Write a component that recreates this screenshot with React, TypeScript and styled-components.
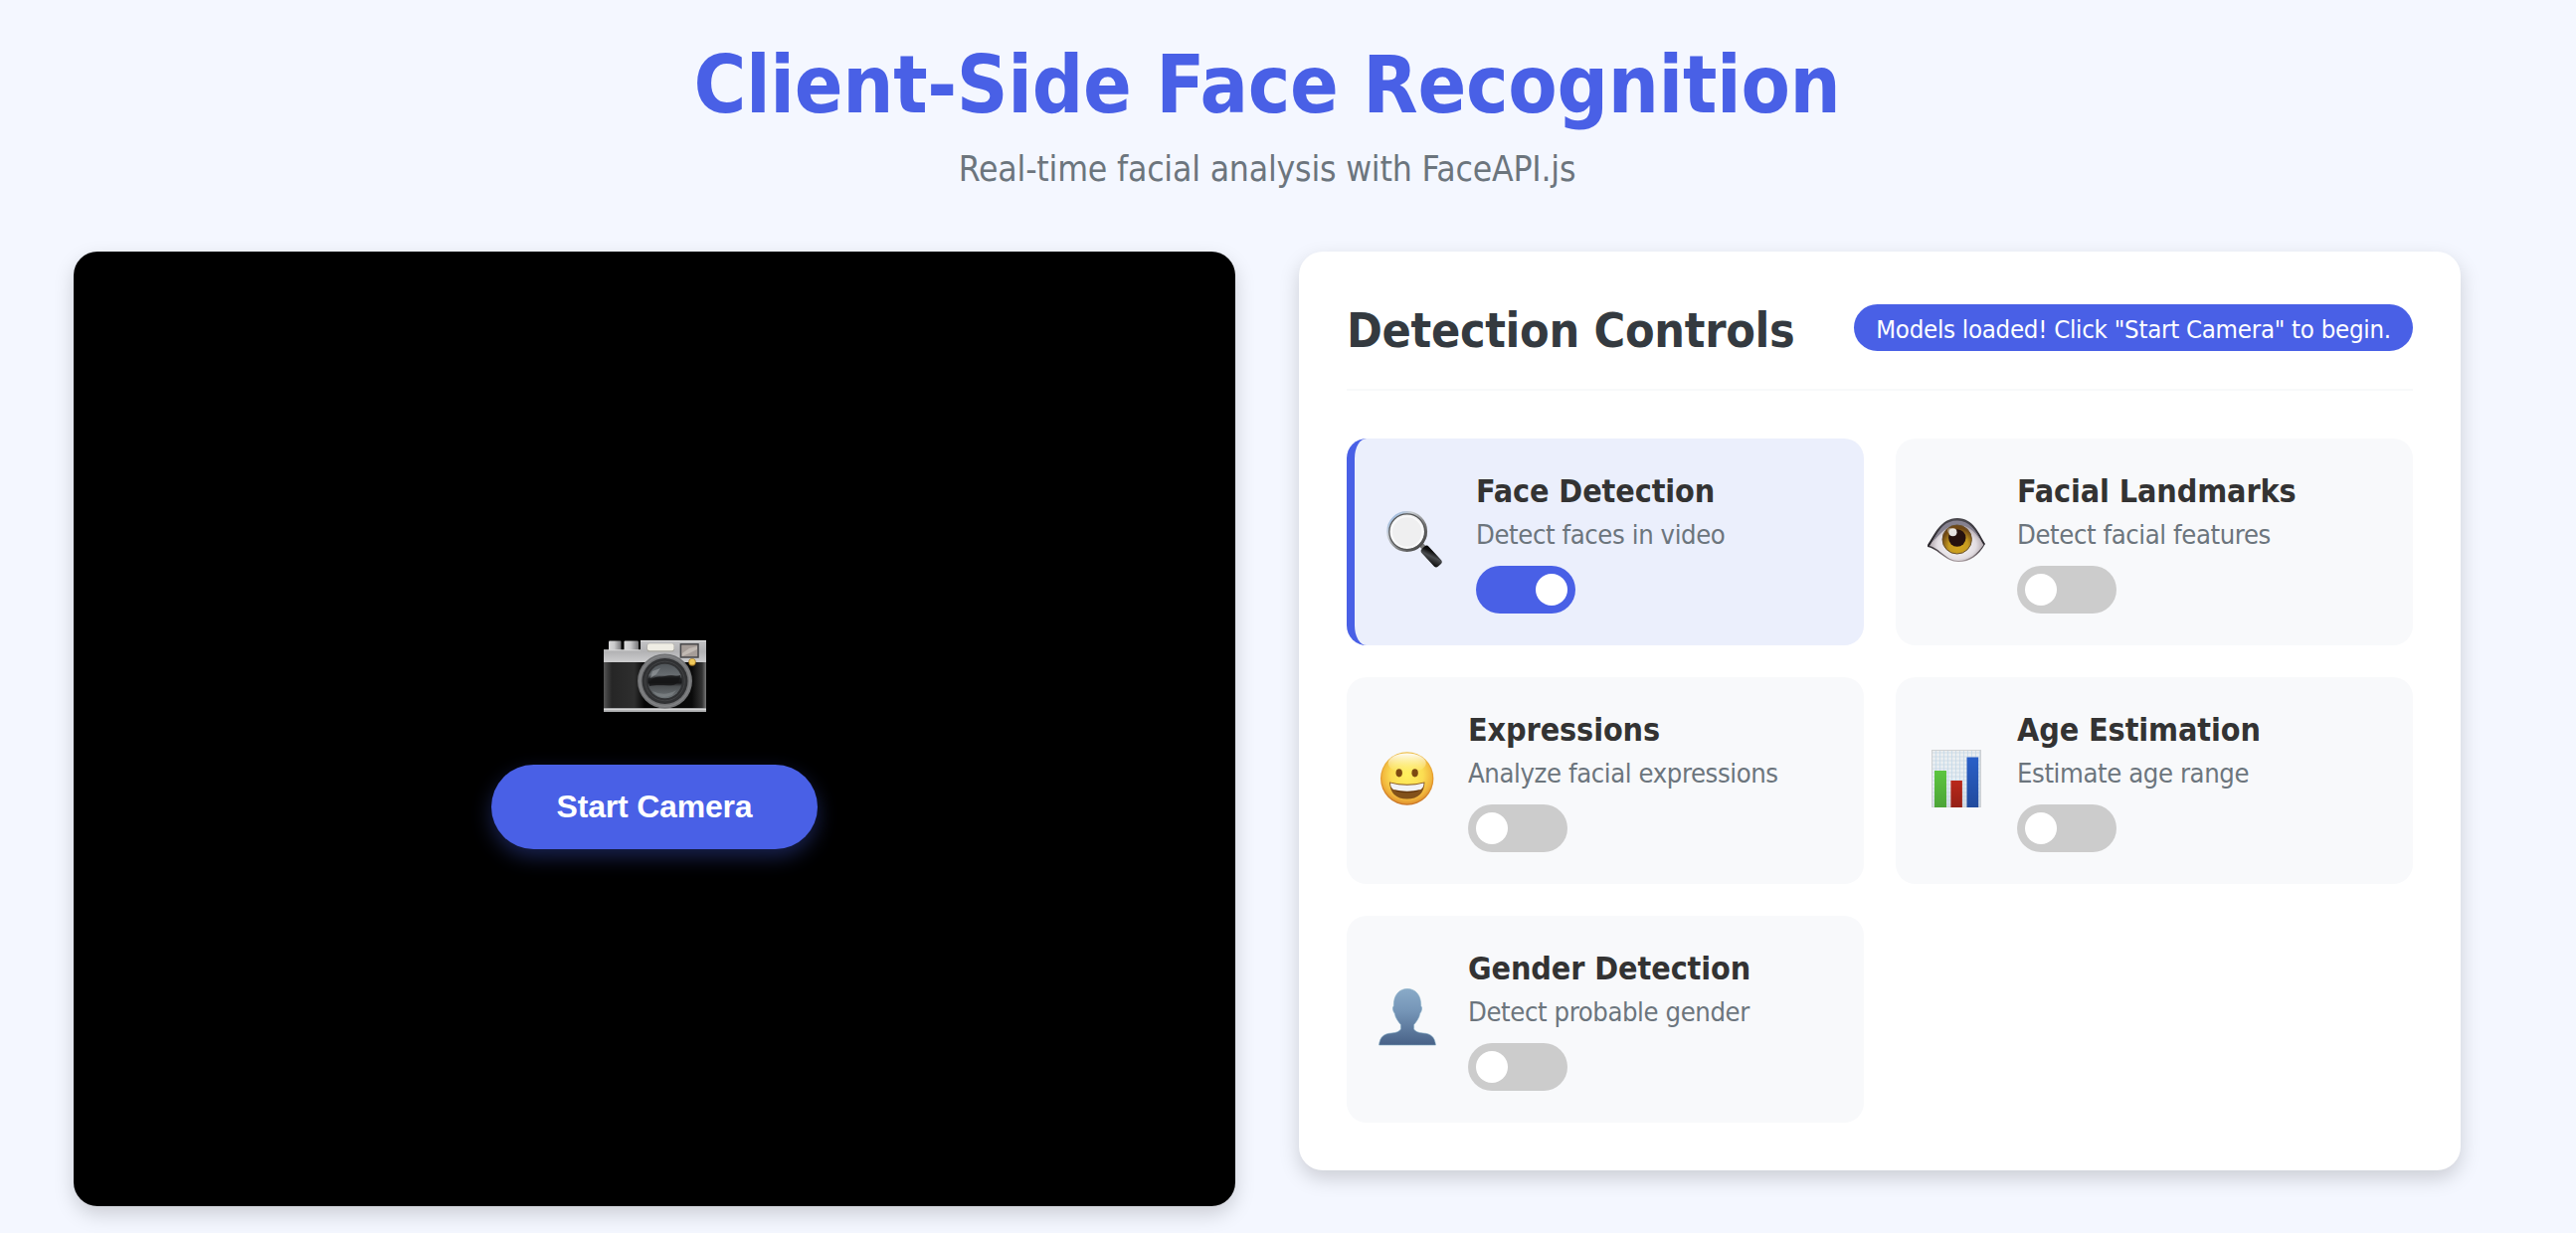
import React, { useState } from 'react';
import styled, { createGlobalStyle } from 'styled-components';

const BLUE = '#4960e6';

const GlobalStyle = createGlobalStyle`
  *, *::before, *::after { box-sizing: border-box; }
  body {
    margin: 0;
    background: #f4f7ff;
    color: #333;
    font-family: 'DejaVu Sans Condensed', 'DejaVu Sans', 'Noto Sans', sans-serif;
    overflow: hidden;
  }
`;

const Page = styled.main`
  width: 2548px;
  height: 1240px;
  padding: 38px 74px 0;
`;

const PageHeader = styled.header`
  height: 215px;
  text-align: center;
`;

const Title = styled.h1`
  margin: 0 0 8px;
  font-size: 80px;
  line-height: 96px;
  font-weight: 700;
  letter-spacing: -0.3px;
  color: ${BLUE};
`;

const Subtitle = styled.p`
  margin: 0;
  font-size: 35.2px;
  line-height: 56px;
  letter-spacing: -0.19px;
  color: #6c757d;
`;

const Columns = styled.div`
  display: grid;
  grid-template-columns: 1fr 1fr;
  gap: 64px;
  align-items: start;
`;

const VideoPanel = styled.section`
  height: 960px;
  display: flex;
  flex-direction: column;
  align-items: center;
  justify-content: center;
  gap: 32px;
  border-radius: 24px;
  background: #000;
  box-shadow: 0 8px 20px rgba(0, 0, 0, 0.17);
`;

const CameraSlot = styled.div`
  height: 125px;
  padding-top: 32px;
`;

const StartButton = styled.button`
  width: 328px;
  height: 85px;
  border: 0;
  padding: 0;
  border-radius: 100px;
  background: ${BLUE};
  color: #fff;
  font: 700 32px 'Liberation Sans', Arial, sans-serif;
  letter-spacing: -0.2px;
  box-shadow: 0 8px 20px rgba(73, 96, 230, 0.35);
`;

const ControlsPanel = styled.section`
  padding: 48px;
  border-radius: 24px;
  background: #fff;
  box-shadow: 0 8px 20px rgba(0, 0, 0, 0.17);
`;

const ControlsHeader = styled.div`
  height: 92px;
  margin-bottom: 48px;
  display: flex;
  justify-content: space-between;
  align-items: flex-start;
  border-bottom: 2px solid #f8f9fa;
`;

const ControlsTitle = styled.h2`
  margin: 0;
  font-size: 48px;
  line-height: 62px;
  letter-spacing: -0.3px;
  color: #343a40;
`;

const Status = styled.span`
  width: 562px;
  height: 47px;
  margin-top: 5px;
  padding-top: 3px;
  border-radius: 40px;
  background: ${BLUE};
  color: #fff;
  font-size: 25.6px;
  line-height: 44px;
  letter-spacing: -0.27px;
  text-align: center;
  white-space: nowrap;
`;

const CardGrid = styled.div`
  display: grid;
  grid-template-columns: 1fr 1fr;
  gap: 32px;
`;

const Card = styled.article<{ $active: boolean }>`
  height: 208px;
  display: flex;
  align-items: flex-start;
  gap: 32px;
  padding: 0 32px;
  border-radius: 20px;
  border-left: ${p => (p.$active ? `8px solid ${BLUE}` : '0')};
  background: ${p => (p.$active ? '#ebeffc' : '#f8f9fb')};
`;

const CardIcon = styled.div`
  flex: none;
  align-self: center;
  width: 58px;
  height: 64px;
  svg { display: block; }
`;

const CardBody = styled.div`
  padding-top: 33px;
`;

const CardTitle = styled.h3`
  margin: 0 0 5px;
  font-size: 32px;
  line-height: 40px;
  letter-spacing: -0.1px;
  color: #333;
`;

const CardText = styled.p`
  margin: 0 0 13px;
  font-size: 27.2px;
  line-height: 37px;
  letter-spacing: -0.4px;
  color: #6c757d;
`;

const Toggle = styled.button<{ $on: boolean }>`
  display: flex;
  justify-content: ${p => (p.$on ? 'flex-end' : 'flex-start')};
  align-items: center;
  width: 100px;
  height: 48px;
  padding: 0 8px;
  border: 0;
  border-radius: 48px;
  background: ${p => (p.$on ? BLUE : '#ccc')};
`;

const Knob = styled.span`
  width: 32px;
  height: 32px;
  border-radius: 50%;
  background: #fff;
`;

const CameraIcon = () => (
  <svg width="103" height="72" viewBox="0 0 103 72" style={{ display: 'block' }}>
    <defs>
      <linearGradient id="camSilver" x1="0" y1="0" x2="0" y2="1">
        <stop offset="0" stopColor="#c4c4c6" /><stop offset=".5" stopColor="#b2b2b4" /><stop offset="1" stopColor="#cfcfd0" />
      </linearGradient>
      <linearGradient id="camKnob" x1="0" x2="1">
        <stop offset="0" stopColor="#d9d9da" /><stop offset=".45" stopColor="#c9c9cb" /><stop offset="1" stopColor="#77777a" />
      </linearGradient>
      <linearGradient id="camLeather" x1="0" x2="1">
        <stop offset="0" stopColor="#555" /><stop offset=".04" stopColor="#3c3c3c" /><stop offset=".08" stopColor="#262626" />
        <stop offset=".3" stopColor="#2e2e2e" /><stop offset=".4" stopColor="#050505" /><stop offset=".86" stopColor="#0a0a0a" />
        <stop offset=".96" stopColor="#333" /><stop offset="1" stopColor="#777" />
      </linearGradient>
      <linearGradient id="camGlass" x1="0" y1="0" x2="0" y2="1">
        <stop offset="0" stopColor="#51565a" /><stop offset=".32" stopColor="#676c70" /><stop offset=".43" stopColor="#202123" />
        <stop offset=".55" stopColor="#171719" /><stop offset=".65" stopColor="#4d5053" /><stop offset="1" stopColor="#6d7376" />
      </linearGradient>
    </defs>
    <rect x="5" y="0.5" width="12.5" height="11" rx="1" fill="url(#camKnob)" />
    <rect x="20.5" y="0.5" width="14.5" height="11" rx="1" fill="url(#camKnob)" />
    <path d="M0 9.5H37V0H103V22.5H0Z" fill="url(#camSilver)" />
    <path d="M37 0H103V1H37ZM0 9.5H37V10.3H0Z" fill="#e6e6e6" />
    <rect y="22" width="103" height="46.5" fill="url(#camLeather)" />
    <rect y="68" width="103" height="4" fill="#a9aaac" />
    <rect y="69" width="103" height="1.2" fill="#d6d6d6" />
    <rect x="43.5" y="3" width="27.5" height="8.6" rx="2.5" fill="#a6a49c" />
    <rect x="44" y="3.2" width="26.5" height="7" rx="2" fill="#efede4" />
    <rect x="77.4" y="3.8" width="17.6" height="13.2" fill="#a69d98" stroke="#47474a" strokeWidth="1.5" />
    <path d="M79 13L86 8L94 6V9L86 13L79 16Z" fill="#c1b9b3" />
    <circle cx="61.5" cy="41" r="27.5" fill="#717274" />
    <circle cx="61.5" cy="41" r="25.2" fill="none" stroke="#818284" strokeWidth="1.5" />
    <circle cx="61.5" cy="41" r="23" fill="#303133" />
    <circle cx="61.5" cy="41" r="19.8" fill="none" stroke="#414244" strokeWidth="1" />
    <circle cx="61.5" cy="41" r="17.2" fill="url(#camGlass)" />
    <path d="M46 42C51 35 57 37 62 36C68 34 74 37 77 35C77 40 75 43 70 45C62 46 55 44 46 46Z" fill="#151517" opacity=".8" />
    <path d="M49 31L57 28L53 34L47 38Z" fill="#a5aaad" opacity=".5" />
    <path d="M49 51Q61 57 73 50L69 55Q60 59 53 55Z" fill="#8f9497" opacity=".45" />
    <circle cx="89" cy="22" r="3.7" fill="#a67823" />
    <circle cx="89" cy="21.7" r="2.9" fill="#f0c95a" />
  </svg>
);

const MagnifierIcon = () => (
  <svg width="58" height="64" viewBox="0 0 58 64">
    <defs>
      <linearGradient id="rim" x1="0" y1="0" x2="1" y2="1">
        <stop offset="0" stopColor="#8bb5e8" /><stop offset=".3" stopColor="#c9ced4" /><stop offset=".65" stopColor="#777" /><stop offset="1" stopColor="#333" />
      </linearGradient>
      <linearGradient id="handle" x1="0" y1="1" x2="1" y2="0">
        <stop offset="0" stopColor="#050505" /><stop offset=".5" stopColor="#4b4d50" /><stop offset=".75" stopColor="#111" /><stop offset="1" stopColor="#000" />
      </linearGradient>
    </defs>
    <path d="M34 34L38 38" stroke="#777" strokeWidth="5" />
    <rect x="-4.8" y="-12" width="9.6" height="24" rx="3" transform="translate(45.2 46.6) rotate(-43)" fill="url(#handle)" />
    <circle cx="20.7" cy="21.5" r="19" fill="#efeff0" stroke="url(#rim)" strokeWidth="2.8" />
    <circle cx="20.7" cy="21.7" r="17.9" fill="none" stroke="#555657" strokeWidth="1.2" />
    <circle cx="20.7" cy="22" r="15.5" fill="none" stroke="#fff" strokeWidth="1.6" opacity=".7" />
  </svg>
);

const EyeIcon = () => (
  <svg width="58" height="64" viewBox="0 0 58 64">
    <defs>
      <linearGradient id="lid" x1="0" y1="0" x2="0" y2="1">
        <stop offset="0" stopColor="#4d4b50" /><stop offset=".6" stopColor="#27242a" /><stop offset="1" stopColor="#a5989c" />
      </linearGradient>
      <radialGradient id="white" cx=".5" cy=".6" r=".55">
        <stop offset="0" stopColor="#fff" /><stop offset=".65" stopColor="#e2dde2" /><stop offset="1" stopColor="#9e9298" />
      </radialGradient>
      <radialGradient id="iris" cx=".55" cy=".72" r=".6">
        <stop offset="0" stopColor="#d5a71e" /><stop offset=".55" stopColor="#c59a20" /><stop offset="1" stopColor="#704815" />
      </radialGradient>
    </defs>
    <path d="M0 35C7 25 13 8 30 8C46 8 52 24 58 34C51 46 43 52 31 52C18 52 11 39 0 37Z" fill="url(#lid)" />
    <path d="M2 36C9 26 14 12 30 12C45 12 51 26 56.5 35C50 44 42 51 31 51C19 51 12 38 2 36Z" fill="url(#white)" />
    <path d="M5 32C12 18 18 10.500 30 10.500C42 10.500 49 21 54 31C46 20 41 15 30 15C19 15 14 23 5 32Z" fill="#85818f" />
    <ellipse cx="29.700" cy="29.500" rx="14.700" ry="14.500" fill="url(#iris)" stroke="#68502b" strokeWidth="1" />
    <circle cx="29.800" cy="28" r="8.700" fill="#26120f" />
    <circle cx="25.500" cy="22.300" r="4" fill="#fff" opacity=".88" />
    <circle cx="22.500" cy="20.500" r="2.500" fill="#ddd" opacity=".45" />
  </svg>
);

const SmileIcon = () => (
  <svg width="58" height="64" viewBox="0 0 58 64">
    <defs>
      <linearGradient id="faceEdge" x1="0" y1="0" x2="0" y2="1">
        <stop offset="0" stopColor="#edc04a" /><stop offset=".5" stopColor="#e69a2c" /><stop offset="1" stopColor="#c87527" />
      </linearGradient>
      <radialGradient id="face" cx=".5" cy=".42" r=".58">
        <stop offset="0" stopColor="#fff15f" /><stop offset=".55" stopColor="#fbdc52" /><stop offset=".85" stopColor="#f1b53c" /><stop offset="1" stopColor="#e09330" />
      </radialGradient>
      <linearGradient id="shine" x1="0" y1="0" x2="0" y2="1">
        <stop offset="0" stopColor="#fff" stopOpacity=".95" /><stop offset="1" stopColor="#fff9a0" stopOpacity="0" />
      </linearGradient>
    </defs>
    <circle cx="28.700" cy="30" r="26.700" fill="url(#faceEdge)" />
    <circle cx="28.700" cy="30" r="25.500" fill="url(#face)" />
    <ellipse cx="28.700" cy="14.500" rx="19" ry="10" fill="url(#shine)" />
    <ellipse cx="20.700" cy="24.300" rx="3.200" ry="4.100" fill="#7d4a11" />
    <ellipse cx="36.600" cy="24.300" rx="3.200" ry="4.100" fill="#7d4a11" />
    <path d="M11 33.500Q28.700 38 46.500 33.500Q45.500 50.500 28.700 50.500Q12 50.500 11 33.500Z" fill="#82511a" />
    <path d="M12 34.500Q28.700 39 45.500 34.500Q45.500 39 42.500 41Q28.700 44.500 15 41Q12 39 12 34.500Z" fill="#f1f2f5" />
    <path d="M16 41.500Q28.700 44.800 41.500 41.500L39 43Q28.700 45.500 18.500 43Z" fill="#61350f" />
  </svg>
);

const gridLines = Array.from({ length: 13 }, (_, i) => 4 + i * 4);

const ChartIcon = () => (
  <svg width="58" height="64" viewBox="0 0 58 64">
    <defs>
      <linearGradient id="sheet" x1="0" y1="0" x2="0" y2="1">
        <stop offset="0" stopColor="#eceeef" /><stop offset=".55" stopColor="#e6edf3" /><stop offset="1" stopColor="#d7dbe2" />
      </linearGradient>
      <linearGradient id="green" x1="0" y1="0" x2="0" y2="1"><stop offset="0" stopColor="#5cc53f" /><stop offset="1" stopColor="#4ca437" /></linearGradient>
      <linearGradient id="red" x1="0" y1="0" x2="0" y2="1"><stop offset="0" stopColor="#ba281b" /><stop offset="1" stopColor="#942016" /></linearGradient>
      <linearGradient id="blue" x1="0" y1="0" x2="0" y2="1"><stop offset="0" stopColor="#295fc8" /><stop offset="1" stopColor="#214b9d" /></linearGradient>
    </defs>
    <rect x="4" y="1" width="50" height="58" fill="url(#sheet)" />
    {gridLines.map(x => <path key={`v${x}`} d={`M${x + 0.5} 1V59`} stroke="#bfd7e9" strokeWidth=".7" />)}
    {gridLines.concat(56).map(y => <path key={`h${y}`} d={`M4 ${y}H54`} stroke="#c6d6e3" strokeWidth=".7" />)}
    <rect x="4.500" y="1.500" width="49" height="57" fill="none" stroke="#cfd1d3" />
    <rect x="7" y="22" width="12" height="37" fill="url(#green)" />
    <rect x="23.400" y="32" width="11.500" height="27" fill="url(#red)" />
    <rect x="39.500" y="8.500" width="11.700" height="50.500" fill="url(#blue)" />
  </svg>
);

const PersonIcon = () => (
  <svg width="58" height="64" viewBox="0 0 58 64">
    <defs>
      <linearGradient id="bust" x1="0" y1="0" x2="0" y2="1">
        <stop offset="0" stopColor="#89aac8" /><stop offset=".4" stopColor="#7595b7" /><stop offset="1" stopColor="#486287" />
      </linearGradient>
    </defs>
    <path d="M29 1.500C20.500 1.500 15 8 15.300 19C13.800 19.500 14.300 24 16.200 26C17 31 20 34.500 22.400 37.500V42C21 44.500 18 45.500 13 46C5 46.500 1.500 50 .5 58H57.500C56.500 50 53 46.500 45 46C40 45.500 37 44.500 35.600 42V37.500C38 34.500 41 31 41.800 26C43.700 24 44.200 19.500 42.700 19C43 8 37.500 1.500 29 1.500Z" fill="url(#bust)" stroke="#84adc4" strokeWidth=".6" />
  </svg>
);

const detections = [
  { id: 'face', title: 'Face Detection', text: 'Detect faces in video', Icon: MagnifierIcon },
  { id: 'landmarks', title: 'Facial Landmarks', text: 'Detect facial features', Icon: EyeIcon },
  { id: 'expressions', title: 'Expressions', text: 'Analyze facial expressions', Icon: SmileIcon },
  { id: 'age', title: 'Age Estimation', text: 'Estimate age range', Icon: ChartIcon },
  { id: 'gender', title: 'Gender Detection', text: 'Detect probable gender', Icon: PersonIcon },
];

export default function App() {
  const [enabled, setEnabled] = useState<Record<string, boolean>>({ face: true });
  return (
    <>
      <GlobalStyle />
      <Page>
        <PageHeader>
          <Title>Client-Side Face Recognition</Title>
          <Subtitle>Real-time facial analysis with FaceAPI.js</Subtitle>
        </PageHeader>
        <Columns>
          <VideoPanel>
            <CameraSlot><CameraIcon /></CameraSlot>
            <StartButton>Start Camera</StartButton>
          </VideoPanel>
          <ControlsPanel>
            <ControlsHeader>
              <ControlsTitle>Detection Controls</ControlsTitle>
              <Status>Models loaded! Click "Start Camera" to begin.</Status>
            </ControlsHeader>
            <CardGrid>
              {detections.map(({ id, title, text, Icon }) => {
                const on = !!enabled[id];
                return (
                  <Card key={id} $active={on}>
                    <CardIcon><Icon /></CardIcon>
                    <CardBody>
                      <CardTitle>{title}</CardTitle>
                      <CardText>{text}</CardText>
                      <Toggle $on={on} aria-pressed={on} onClick={() => setEnabled(s => ({ ...s, [id]: !s[id] }))}>
                        <Knob />
                      </Toggle>
                    </CardBody>
                  </Card>
                );
              })}
            </CardGrid>
          </ControlsPanel>
        </Columns>
      </Page>
    </>
  );
}
